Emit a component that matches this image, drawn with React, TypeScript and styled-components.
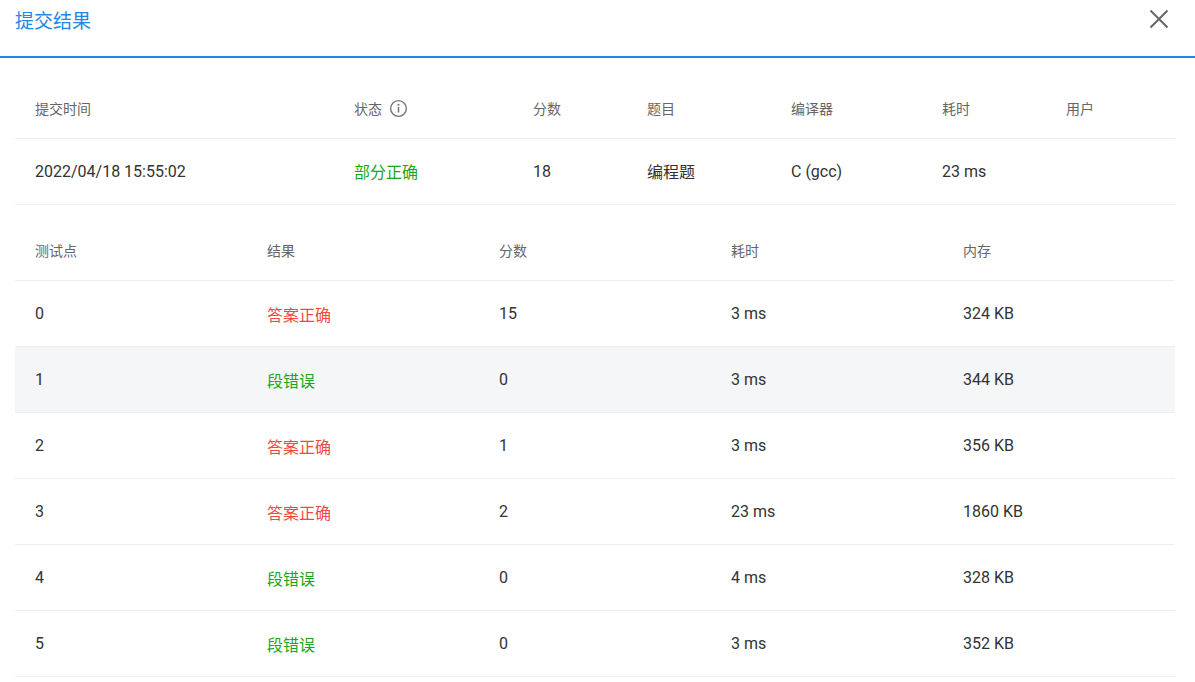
import React from "react";
import styled, { createGlobalStyle } from "styled-components";

const Global = createGlobalStyle`
  body { margin: 0; background: #fff; font-family: Roboto, "Noto Sans CJK SC", sans-serif; }
  *, *::before, *::after { box-sizing: border-box; }
`;

const Header = styled.div`
  height: 58px;
  display: flex;
  align-items: center;
  justify-content: space-between;
  padding: 0 26px 0 15px;
  border-bottom: 2px solid #1e88e5;
`;

const Title = styled.div`
  color: #1e88e5;
  font-size: 19px;
  margin-top: -18px;
`;

const Close = styled.button`
  border: 0;
  background: none;
  padding: 0;
  margin-top: -18px;
  color: #666;
  display: flex;
`;

const Body = styled.div`
  padding: 20px 20px 0 15px;
`;

const Table = styled.table`
  width: 100%;
  border-collapse: collapse;
  table-layout: fixed;
`;

const Th = styled.th<{ w?: number }>`
  width: ${(p) => (p.w ? `${p.w}px` : "auto")};
  height: 60px;
  padding: 0 0 0 20px;
  text-align: left;
  font-weight: 400;
  font-size: 14px;
  color: #666;
  border-bottom: 1px solid #eee;
`;

const Tr = styled.tr<{ $shade?: boolean }>`
  background: ${(p) => (p.$shade ? "#f5f6f7" : "transparent")};
`;

const Td = styled.td`
  height: 66px;
  padding: 0 0 0 20px;
  font-size: 16px;
  color: #333;
  border-bottom: 1px solid #eee;
`;

const HeadTh = styled(Th)`
  height: 76px;
  padding-top: 16px;
`;

const Status = styled.span<{ ok: boolean }>`
  color: ${(p) => (p.ok ? "#f5483b" : "#1aa51a")};
  font-size: 16px;
`;

const Info = () => (
  <svg width="19" height="19" viewBox="0 0 20 20" style={{ verticalAlign: "-4px", marginLeft: 7 }}>
    <circle cx="10" cy="10" r="8.3" fill="none" stroke="#777" strokeWidth="1.5" />
    <circle cx="10" cy="6" r="1.1" fill="#777" />
    <rect x="9.2" y="8.3" width="1.6" height="6" fill="#777" />
  </svg>
);

const cases = [
  ["0", true, "15", "3 ms", "324 KB"],
  ["1", false, "0", "3 ms", "344 KB"],
  ["2", true, "1", "3 ms", "356 KB"],
  ["3", true, "2", "23 ms", "1860 KB"],
  ["4", false, "0", "4 ms", "328 KB"],
  ["5", false, "0", "3 ms", "352 KB"],
] as const;

export default function App() {
  return (
    <>
      <Global />
      <Header>
        <Title>提交结果</Title>
        <Close>
          <svg width="20" height="20" viewBox="0 0 20 20">
            <path d="M1.5 1.5L18.5 18.5M18.5 1.5L1.5 18.5" stroke="#666" strokeWidth="2" />
          </svg>
        </Close>
      </Header>
      <Body>
        <Table>
          <thead>
            <tr>
              <Th w={319}>提交时间</Th>
              <Th w={179}>状态<Info /></Th>
              <Th w={114}>分数</Th>
              <Th w={144}>题目</Th>
              <Th w={151}>编译器</Th>
              <Th w={124}>耗时</Th>
              <Th>用户</Th>
            </tr>
          </thead>
          <tbody>
            <tr>
              <Td>2022/04/18 15:55:02</Td>
              <Td><Status ok={false}>部分正确</Status></Td>
              <Td>18</Td>
              <Td>编程题</Td>
              <Td>C (gcc)</Td>
              <Td>23 ms</Td>
              <Td></Td>
            </tr>
          </tbody>
        </Table>
        <Table>
          <thead>
            <tr>
              <HeadTh>测试点</HeadTh>
              <HeadTh>结果</HeadTh>
              <HeadTh>分数</HeadTh>
              <HeadTh>耗时</HeadTh>
              <HeadTh>内存</HeadTh>
            </tr>
          </thead>
          <tbody>
            {cases.map((c, i) => (
              <Tr key={c[0]} $shade={i === 1}>
                <Td>{c[0]}</Td>
                <Td><Status ok={c[1]}>{c[1] ? "答案正确" : "段错误"}</Status></Td>
                <Td>{c[2]}</Td>
                <Td>{c[3]}</Td>
                <Td>{c[4]}</Td>
              </Tr>
            ))}
          </tbody>
        </Table>
      </Body>
    </>
  );
}
